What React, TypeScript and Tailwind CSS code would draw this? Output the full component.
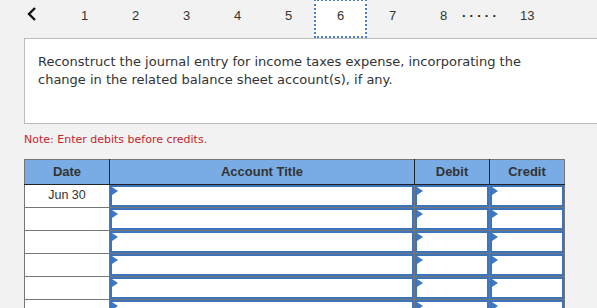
import React from 'react';

const pages = ['1', '2', '3', '4', '5', '6', '7', '8'];

function Marker() {
  return (
    <svg className="absolute left-0 top-0" width="6" height="8" viewBox="0 0 6 8">
      <path d="M0 0 L6 4 L0 8 Z" fill="#3d78c4" />
    </svg>
  );
}

function InputCell() {
  return (
    <td className="border border-[#767676] p-0 h-[23px]">
      <div className="relative h-[22px] border-2 border-[#3b74ba] bg-white">
        <Marker />
      </div>
    </td>
  );
}

export default function App() {
  const rows = ['Jun 30', '', '', '', '', ''];

  return (
    <div className="w-[597px] h-[308px] overflow-hidden bg-[#f2f2f2] font-['Liberation_Sans',Arial,sans-serif] text-[#333]">
      {/* question pager */}
      <div className="flex items-start h-[38px] relative">
        <div className="w-[59px] flex justify-start pt-[7px] pl-[27px]">
          <svg width="10" height="14" viewBox="0 0 10 14">
            <path d="M8 1 L2 7 L8 13" fill="none" stroke="#111" strokeWidth="2.4" />
          </svg>
        </div>
        {pages.map((p) => (
          <div
            key={p}
            className={
              p === '6'
                ? 'w-[53px] h-[39px] -mt-[1px] flex justify-center pt-[5px] text-[13px] bg-white border-2 border-dotted border-[#4b7fc0] z-10'
                : 'w-[51px] flex justify-center pt-[6px] text-[13px]'
            }
          >
            {p}
          </div>
        ))}
        <div className="-ml-[7px] w-[44px] pt-[3px] text-[13px] font-bold tracking-[4px] text-[#222]">.....</div>
        <div className="ml-[14px] pt-[6px] text-[13px]">13</div>
      </div>

      {/* prompt */}
      <div className="ml-[24px] h-[86px] bg-white border border-[#bbb] border-r-0 pl-[13px] pt-[14px] text-[13px] leading-[18px] text-[#333] font-['DejaVu_Sans',Verdana,sans-serif]">
        <p>Reconstruct the journal entry for income taxes expense, incorporating the</p>
        <p>change in the related balance sheet account(s), if any.</p>
      </div>

      <p className="ml-[24px] mt-[8px] text-[11px] text-[#c1272d] font-['DejaVu_Sans',Verdana,sans-serif]">
        Note: Enter debits before credits.
      </p>

      {/* journal table */}
      <table className="ml-[24px] mt-[10px] border-collapse table-fixed w-[540px]">
        <colgroup>
          <col className="w-[85px]" />
          <col className="w-[305px]" />
          <col className="w-[75px]" />
          <col className="w-[75px]" />
        </colgroup>
        <thead>
          <tr className="h-[25px] bg-[#79ace4] text-[13px] text-[#333]">
            <th className="border border-[#767676] border-r-[#222] border-b-[#222] font-semibold">Date</th>
            <th className="border border-[#767676] border-r-[#222] border-b-[#222] font-semibold">Account Title</th>
            <th className="border border-[#767676] border-r-[#222] border-b-[#222] font-semibold">Debit</th>
            <th className="border border-[#767676] border-b-[#222] font-semibold">Credit</th>
          </tr>
        </thead>
        <tbody>
          {rows.map((d, i) => (
            <tr key={i}>
              <td className="border border-[#767676] bg-white h-[23px] text-center text-[12.5px] text-[#333]">{d}</td>
              <InputCell />
              <InputCell />
              <InputCell />
            </tr>
          ))}
        </tbody>
      </table>
    </div>
  );
}
